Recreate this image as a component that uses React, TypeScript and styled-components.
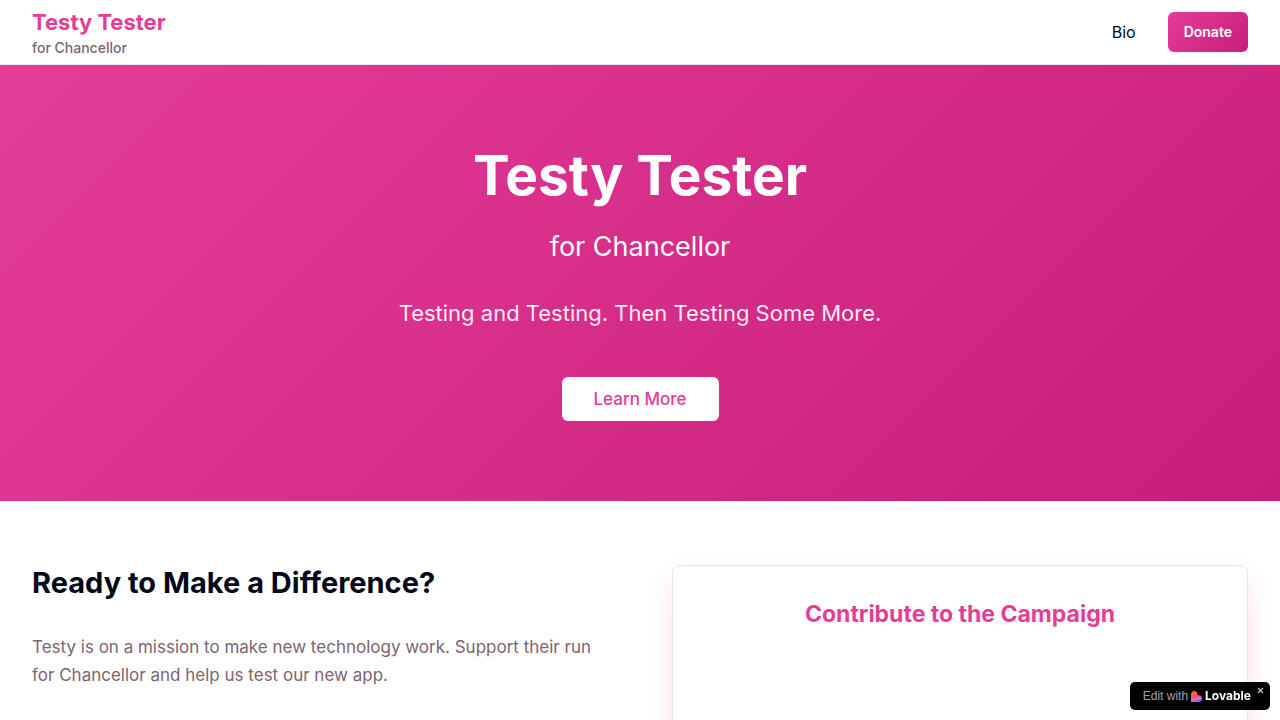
import React from "react";
import styled, { createGlobalStyle } from "styled-components";

const pink = "#e43d98";
const gradient = "linear-gradient(135deg, #e43d98, #c81d7a)";
const ink = "#020817";
const muted = "#7c656f";

const GlobalStyle = createGlobalStyle`
  *, *::before, *::after { box-sizing: border-box; }
  html { scrollbar-width: none; }
  body {
    margin: 0;
    background: #ffffff;
    color: ${ink};
    font-family: Inter, "Liberation Sans", sans-serif;
    font-size: 16px;
    line-height: 24px;
  }
  h1, h2, h3, p { margin: 0; }
  a { color: inherit; text-decoration: none; }
  button { font-family: inherit; border: 0; cursor: pointer; }
`;

const Header = styled.header`
  display: flex;
  align-items: center;
  justify-content: space-between;
  height: 65px;
  padding: 0 32px;
  border-bottom: 1px solid #e2e8f0;
`;

const Brand = styled.a`
  display: flex;
  flex-direction: column;
`;

const BrandName = styled.span`
  color: ${pink};
  font-size: 22px;
  font-weight: 700;
  line-height: 32px;
`;

const BrandRole = styled.span`
  color: ${muted};
  font-size: 14px;
  font-weight: 500;
  line-height: 20px;
`;

const Nav = styled.nav`
  display: flex;
  align-items: center;
  gap: 32px;
`;

const DonateButton = styled.button`
  height: 40px;
  padding: 0 16px;
  border-radius: 6px;
  background: ${gradient};
  color: #ffffff;
  font-size: 14px;
  font-weight: 600;
  line-height: 20px;
`;

const Hero = styled.section`
  display: flex;
  flex-direction: column;
  align-items: center;
  padding: 80px 32px;
  background: ${gradient};
  color: #ffffff;
  text-align: center;
`;

const HeroTitle = styled.h1`
  margin-bottom: 24px;
  font-size: 55px;
  font-weight: 700;
  line-height: 60px;
`;

const HeroRole = styled.p`
  margin-bottom: 32px;
  font-size: 27px;
  line-height: 36px;
`;

const HeroSlogan = styled.p`
  margin-bottom: 48px;
  font-size: 22px;
  line-height: 32px;
  opacity: 0.9;
`;

const LearnButton = styled.button`
  height: 44px;
  padding: 0 32px;
  border-radius: 6px;
  background: #ffffff;
  color: ${pink};
  font-size: 17px;
  font-weight: 500;
  line-height: 28px;
`;

const Details = styled.section`
  display: grid;
  grid-template-columns: 1fr 1fr;
  gap: 64px;
  padding: 64px 32px;
`;

const Heading = styled.h2`
  margin-bottom: 32px;
  font-size: 29px;
  font-weight: 700;
  line-height: 36px;
`;

const Copy = styled.p`
  color: ${muted};
  font-size: 17px;
  line-height: 28px;
`;

const Card = styled.div`
  min-height: 400px;
  padding: 32px;
  border: 1px solid #e2e8f0;
  border-radius: 8px;
  background: #ffffff;
  box-shadow: 0 10px 30px -10px rgba(228, 61, 152, 0.3);
`;

const CardTitle = styled.h3`
  color: ${pink};
  font-size: 23px;
  font-weight: 700;
  line-height: 32px;
  text-align: center;
`;

const Badge = styled.aside`
  position: fixed;
  right: 10px;
  bottom: 10px;
  display: flex;
  height: 28px;
  padding-left: 13px;
  border-radius: 5px;
  background: #000000;
`;

const BadgeLink = styled.a`
  display: flex;
  align-items: center;
  gap: 3px;
  color: #a1a1aa;
  font-family: "Liberation Sans", sans-serif;
  font-size: 12px;
  line-height: 16px;
`;

const BadgeBrand = styled.span`
  color: #ffffff;
  font-family: Inter, sans-serif;
  font-size: 12px;
  font-weight: 700;
`;

const CloseButton = styled.button`
  display: flex;
  align-items: center;
  justify-content: center;
  width: 19px;
  height: 16px;
  padding: 0;
  background: transparent;
  color: #c4c4cc;
`;

function Heart() {
  return (
    <svg width="11" height="11" viewBox="0 0 22 22" aria-hidden="true">
      <defs>
        <linearGradient id="heart" x1="0.35" y1="0" x2="0.6" y2="1">
          <stop offset="0.2" stopColor="#ff6a13" />
          <stop offset="0.5" stopColor="#ff4f72" />
          <stop offset="0.72" stopColor="#e765d8" />
          <stop offset="1" stopColor="#4b73ff" />
        </linearGradient>
      </defs>
      <path
        fill="url(#heart)"
        d="M6.5 0C10 0 13 3 13 6.5V8.5H15.5C19 8.5 22 11.500 22 15.200S19 22 15.500 22H0V6.500C0 3 3 0 6.500 0Z"
      />
    </svg>
  );
}

export default function App() {
  return (
    <>
      <GlobalStyle />
      <Header>
        <Brand href="#top">
          <BrandName>Testy Tester</BrandName>
          <BrandRole>for Chancellor</BrandRole>
        </Brand>
        <Nav>
          <a href="#bio">Bio</a>
          <DonateButton type="button">Donate</DonateButton>
        </Nav>
      </Header>
      <main>
        <Hero>
          <HeroTitle>Testy Tester</HeroTitle>
          <HeroRole>for Chancellor</HeroRole>
          <HeroSlogan>Testing and Testing. Then Testing Some More.</HeroSlogan>
          <LearnButton type="button">Learn More</LearnButton>
        </Hero>
        <Details>
          <div>
            <Heading>Ready to Make a Difference?</Heading>
            <Copy>
              Testy is on a mission to make new technology work. Support their run for
              Chancellor and help us test our new app.
            </Copy>
          </div>
          <Card>
            <CardTitle>Contribute to the Campaign</CardTitle>
          </Card>
        </Details>
      </main>
      <Badge>
        <BadgeLink href="#edit">
          Edit with
          <Heart />
          <BadgeBrand>Lovable</BadgeBrand>
        </BadgeLink>
        <CloseButton type="button" aria-label="Close">
          <svg width="7" height="7" viewBox="0 0 7 7" aria-hidden="true">
            <path d="M1 1L6 6M6 1L1 6" stroke="currentColor" strokeWidth="1.3" />
          </svg>
        </CloseButton>
      </Badge>
    </>
  );
}
